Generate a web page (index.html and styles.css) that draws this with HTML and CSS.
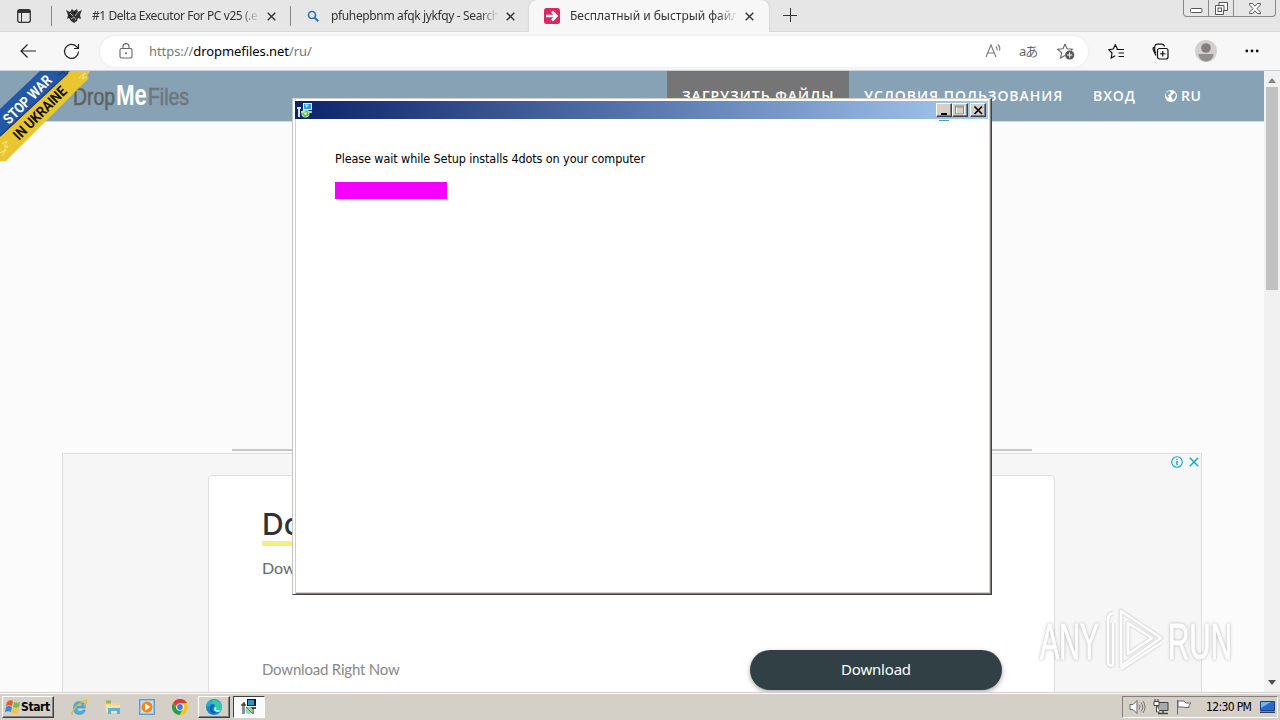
FILE: index.html
```html
<!DOCTYPE html>
<html lang="ru">
<head>
<meta charset="utf-8">
<title>DropMeFiles</title>
<link rel="stylesheet" href="styles.css">
</head>
<body>
<div class="desktop">
  <div class="browser">
    <div class="tabstrip">
      <div class="tab-actions">
        <svg width="14" height="14" viewBox="0 0 14 14"><rect x=".7" y=".7" width="12.6" height="12.6" rx="2" fill="none" stroke="#333" stroke-width="1.3"/><path d="M1 1h12v3H1z" fill="#333"/><path d="M4.5 4v9" stroke="#333"/></svg>
      </div>
      <div class="tab tab-first">
        <svg width="16" height="16" viewBox="0 0 16 16"><path d="M0 2l4 2 2-3 2 2 3-2 1 3 4-2-2 5 1 4-3-1-1 3-3 2-3-2-2-3-2 1 1-4z" fill="#333"/><path d="M4 5l3 3M12 4L9 8M5 11l3-2 2 3" stroke="#aaa" fill="none"/><path d="M8 4l1 2M3 7l2 2" stroke="#000"/></svg>
        <span class="tab-title t1">#1 Delta Executor For PC v25 (.e</span>
        <svg class="x" width="9" height="9" viewBox="0 0 9 9"><path d="M.7.7l7.6 7.6M8.3.7L.7 8.3" stroke="#333" stroke-width="1.4"/></svg>
      </div>
      <div class="tab tab-second">
        <svg width="16" height="16" viewBox="0 0 16 16"><circle cx="7" cy="7" r="3.5" fill="none" stroke="#2d73bd" stroke-width="1.7"/><path d="M9.7 9.7l3.6 3.6" stroke="#2d73bd" stroke-width="2"/></svg>
        <span class="tab-title t2">pfuhepbnm afqk jykfqy - Search</span>
        <svg class="x" width="9" height="9" viewBox="0 0 9 9"><path d="M.7.7l7.6 7.6M8.3.7L.7 8.3" stroke="#333" stroke-width="1.4"/></svg>
      </div>
      <div class="tab tab-active">
        <svg width="16" height="16" viewBox="0 0 16 16"><rect width="16" height="16" rx="2.5" fill="#dc2765"/><path d="M2 8h10M8 3.5L12.5 8 8 12.5" fill="none" stroke="#fff" stroke-width="2.6"/></svg>
        <span class="tab-title t3">Бесплатный и быстрый файло</span>
        <svg class="x" width="9" height="9" viewBox="0 0 9 9"><path d="M.7.7l7.6 7.6M8.3.7L.7 8.3" stroke="#333" stroke-width="1.4"/></svg>
      </div>
      <svg class="new-tab" width="14" height="14" viewBox="0 0 14 14"><path d="M0 7.5h14M7.5 0v14" stroke="#333"/></svg>
      <div class="win-controls">
        <span class="wc wc-min"><svg width="13" height="5" viewBox="0 0 13 5"><rect x=".5" y=".5" width="11.5" height="4" rx="1" fill="#fff" stroke="#555"/></svg></span>
        <span class="wc wc-max"><svg width="13" height="13" viewBox="0 0 13 13"><path d="M4 .5h8.500v8h-4v4H.5v-9H4z" fill="#fff" stroke="#555"/><path d="M4 3.500h5v5" fill="none" stroke="#555"/><rect x="3" y="6" width="3.500" height="3.500" fill="#fff" stroke="#555"/></svg></span>
        <span class="wc wc-close"><svg width="12" height="11" viewBox="0 0 12 11"><path d="M.5.5h3L6 3.200 8.500.5h3v1.400L8 5.500l3.500 3.700v1.300h-3L6 7.800 3.500 10.500h-3V9.200L4 5.500.5 1.900z" fill="#fff" stroke="#555"/></svg></span>
      </div>
    </div>

    <div class="toolbar">
      <svg class="back" width="16" height="14" viewBox="0 0 16 14"><path d="M16 7H1M7.500.5L1 7l6.500 6.500" fill="none" stroke="#222" stroke-width="1.200"/></svg>
      <svg class="reload" width="17" height="17" viewBox="0 0 17 17"><path d="M15.500 8.500a7 7 0 1 1-2-5l1.500 1.600M15.500 1v4.500H11" fill="none" stroke="#222" stroke-width="1.200"/></svg>
      <div class="address">
        <svg width="14" height="16" viewBox="0 0 14 16"><rect x="1" y="5.500" width="12" height="9.500" rx="1.500" fill="none" stroke="#666" stroke-width="1.100"/><path d="M4 5.500V3.600a3 3 0 0 1 6 0v1.900" fill="none" stroke="#666" stroke-width="1.100"/><circle cx="7" cy="10.300" r="1" fill="#666"/></svg>
        <span class="url">https://<b>dropmefiles.net</b>/ru/</span>
        <svg class="read" width="17" height="16" viewBox="0 0 17 16"><path d="M1 14L6 2l5 12M2.800 10h6.400M11 3.500q1.500 1.500 1 4M13 1.500q2.500 2.500 1.500 6" fill="none" stroke="#777" stroke-width="1.100"/></svg>
        <span class="translate">aあ</span>
        <svg class="fav" width="18" height="17" viewBox="0 0 18 17"><path d="M8 1l2 4.700 5.300.5-1 1.300M8 1L6 5.700.7 6.300l4 3.500-1.200 5.400L8 12.500" fill="none" stroke="#666" stroke-width="1.100"/><circle cx="12.700" cy="12" r="4.600" fill="#555"/><path d="M10 12h5.400M12.700 9.300v5.400" stroke="#fff"/></svg>
      </div>
      <svg class="favorites" width="17" height="15" viewBox="0 0 17 15"><path d="M9.500 5L7.300.9 5.200 5 .8 5.700 4 9l-.8 5 4-2.300M8.500 5.500H16M10.500 9H16M10.500 12.500H16" fill="none" stroke="#111" stroke-width="1.200"/></svg>
      <svg class="collections" width="17" height="17" viewBox="0 0 17 17"><rect x="5.500" y="5.500" width="10.500" height="10.500" rx="2" fill="none" stroke="#111" stroke-width="1.200"/><path d="M10.750 8v5.500M8 10.750h5.500M3.800 12.500L1.200 6.500Q.7 5 2 4.300M4 10Q2.700 9 2.700 7.500V4Q3 1.500 5 1.200h4.500q2.500 0 3 2.500" fill="none" stroke="#111" stroke-width="1.200"/></svg>
      <svg class="profile" width="22" height="22" viewBox="0 0 22 22"><circle cx="11" cy="11" r="11" fill="#d2d0ce"/><circle cx="11" cy="8" r="4.800" fill="#827f7c"/><path d="M3.500 15q0-1 1-1h13q1 0 1 1-2 6.500-7.500 6.500T3.500 15z" fill="#918e8b"/></svg>
      <svg class="more" width="14" height="4" viewBox="0 0 14 4"><circle cx="1.800" cy="2" r="1.400" fill="#111"/><circle cx="7" cy="2" r="1.400" fill="#111"/><circle cx="12.200" cy="2" r="1.400" fill="#111"/></svg>
    </div>

    <div class="viewport">
      <div class="page">
        <header class="site-header">
          <svg class="logo" width="120" height="36" viewBox="0 0 120 36">
            <g class="logo-text"><text x="2" y="28" font-size="24" textLength="42" lengthAdjust="spacingAndGlyphs" fill="#5e6265" stroke="#5e6265" stroke-width=".6">Drop</text><text x="45" y="28" font-size="30" textLength="31" lengthAdjust="spacingAndGlyphs" fill="#fff" font-weight="bold">Me</text><text x="77" y="28" font-size="24" textLength="41" lengthAdjust="spacingAndGlyphs" fill="#6e767c" stroke="#6e767c" stroke-width=".6">Files</text></g>
          </svg>
          <nav class="nav">
            <span class="nav-item current n1">ЗАГРУЗИТЬ ФАЙЛЫ</span>
            <span class="nav-item n2">УСЛОВИЯ ПОЛЬЗОВАНИЯ</span>
            <span class="nav-item n3">ВХОД</span>
            <span class="nav-item n4"><svg width="12" height="12" viewBox="0 0 12 12"><circle cx="6" cy="6" r="6" fill="#fff"/><path d="M4 1l2 1-1 2-2 1 1 2-1 1-2-2V3zM8 4l2-1 1 2-1 3-2 2-1-2-1-2z" fill="#86a2b3"/></svg>RU</span>
          </nav>
        </header>
        <svg class="ribbon" width="92" height="92" viewBox="0 0 92 92">
          <path d="M40 0h34L0 66V38z" fill="#2457a4"/>
          <path d="M70 0h20l-3 5 2 2L6 90H0V66z" fill="#e9c630"/>
          <path d="M2 73l5-3-3 6 4-1-6 7M0 82l6-3-4 6M79 7l6-5-3 6 5-2" fill="none" stroke="#f3e48c" stroke-width="1"/>
          <path d="M0 65L68 2M62 1l5 2M58 4l6-3" stroke="#1d4385" stroke-width="1.500"/>
          <g class="ribbon-text" font-weight="bold" font-size="14.500"><text transform="translate(9 54) rotate(-45)" textLength="62" lengthAdjust="spacingAndGlyphs" fill="#fff">STOP WAR</text><text transform="translate(19 70) rotate(-45)" textLength="69" lengthAdjust="spacingAndGlyphs" fill="#111">IN UKRAINE</text></g>
        </svg>
        <main class="content">
          <div class="divider"></div>
          <div class="ad">
            <div class="ad-controls">
              <svg width="12" height="12" viewBox="0 0 12 12"><circle cx="6" cy="6" r="5.300" fill="none" stroke="#19a9bf" stroke-width="1.100"/><path d="M6 5v4M6 2.800v1.300" stroke="#19a9bf" stroke-width="1.500"/></svg>
              <svg width="10" height="10" viewBox="0 0 10 10"><path d="M.8.8l8.400 8.400M9.200.8L.8 9.200" stroke="#19a9bf" stroke-width="1.500"/></svg>
            </div>
            <div class="ad-card">
              <div class="ad-title">Download</div>
              <div class="ad-sub">Download</div>
              <div class="ad-foot"><span class="ad-now">Download Right Now</span><span class="ad-button">Download</span></div>
            </div>
          </div>
        </main>
      </div>
      <div class="scrollbar">
        <svg width="8" height="5" viewBox="0 0 8 5"><path d="M0 5l4-5 4 5z" fill="#858585"/></svg>
        <div class="thumb"></div>
        <svg width="8" height="5" viewBox="0 0 8 5"><path d="M0 0h8L4 5z" fill="#505050"/></svg>
      </div>
    </div>
  </div>

  <div class="setup">
    <div class="setup-title">
      <svg width="16" height="16" viewBox="0 0 16 16"><path d="M6 1h9v7H6z" fill="#e6edf0"/><path d="M7 2h7v5H7z" fill="#2899e5"/><path d="M8 2l4 1-3 3z" fill="#9ee4ff"/><path d="M4 9h11v2H4z" fill="#b9c0bb"/><path d="M1 6l2-1v10H1zM0 5h4v2H0z" fill="#dbe2e4"/><circle cx="8.500" cy="11.500" r="4" fill="#bde3b8"/><path d="M5 12l5-4 2 5-4 2z" fill="#5bbf52"/><circle cx="8.500" cy="11.500" r="1.200" fill="#fff"/></svg>
      <span class="setup-buttons">
        <span class="cb"><svg width="14" height="12" viewBox="0 0 14 12"><path d="M3 8h6v2H3z" fill="#000"/></svg></span>
        <span class="cb"><svg width="14" height="12" viewBox="0 0 14 12"><path d="M2.500 1.500h8v8h-8z" fill="none" stroke="#fff"/><path d="M1.500 1h8v8h-8zM1.500 2h8" fill="none" stroke="#8a8781"/></svg></span>
        <span class="cb cb-close"><svg width="14" height="12" viewBox="0 0 14 12"><path d="M2.500 1.500l7.500 7.500M10 1.500L2.500 9" stroke="#000" stroke-width="1.700"/></svg></span>
      </span>
    </div>
    <div class="setup-body">
      <div class="setup-text">Please wait while Setup installs 4dots on your computer</div>
      <div class="progress"></div>
    </div>
    <div class="spinner-edge"></div>
  </div>

  <svg class="watermark" width="204" height="70" viewBox="0 0 204 70">
    <g class="wm-shadow" fill="none" stroke-linejoin="round">
      <path d="M78 8q-5 1-5 7v42q0 5 5 3V18M86 6l40 27-40 28zM93 18l24 15-24 16zM86 64l40-26" stroke="#bdbdbd" stroke-width="5" opacity=".45"/>
      <path d="M78 8q-5 1-5 7v42q0 5 5 3V18M86 6l40 27-40 28zM93 18l24 15-24 16zM86 64l40-26" stroke="#fff" stroke-width="2.500"/>
    </g>
    <g class="wm-text" font-size="50"><text x="5" y="54" textLength="59" lengthAdjust="spacingAndGlyphs">ANY</text><text x="133" y="54" textLength="64" lengthAdjust="spacingAndGlyphs">RUN</text></g>
  </svg>

  <div class="taskbar">
    <div class="start">
      <svg width="16" height="16" viewBox="0 0 16 16"><path d="M2 3q3-3 6-1L7 7Q4 5.500 1 7z" fill="#e75a23"/><path d="M9 3q3 1.500 6 0l-1 5q-3 1.500-6 0z" fill="#7fb842"/><path d="M1 8q3-2 6 0l-1 5q-3-1.500-6 0z" fill="#3b86d2"/><path d="M8 9q3 1.500 6 0l-1.500 5q-3 1.500-6 0z" fill="#f7c52c"/></svg>
      <span>Start</span>
    </div>
    <div class="quick">
      <svg width="16" height="16" viewBox="0 0 16 16"><path d="M14.500 9H6q0 3.500 3 3.500 2 0 3-1.500h2.300Q13 15.500 8.500 15.500 2.500 15.500 2.500 9T8.500 2.500q6 0 6 6.500zM6 7h5.500Q11 4.500 8.800 4.500T6 7z" fill="#45b2e4" stroke="#2787c0" stroke-width=".5"/><path d="M2 15.500Q-1 15 4 9T15 1q2 2-2 6" fill="none" stroke="#e7b637" stroke-width="1.300"/></svg>
      <svg width="18" height="16" viewBox="0 0 18 16"><path d="M1 3h6l1 1h8v9H1z" fill="#ecd688"/><path d="M2 1.500h5v3H2z" fill="#8cb95b"/><path d="M2 6h14v8H2z" fill="#f3e3a4"/><path d="M4 9h12v6h-3v-3H7v3H4z" fill="#60aedb"/></svg>
      <svg width="16" height="16" viewBox="0 0 16 16"><rect x=".7" y=".7" width="14.600" height="14.600" fill="#c4dff3" stroke="#5f9bcb" stroke-width="1.400"/><circle cx="8" cy="8" r="5.500" fill="#f58514"/><path d="M6 4.500v7L11.500 8z" fill="#fff"/></svg>
      <svg width="16" height="16" viewBox="0 0 16 16"><circle cx="8" cy="8" r="8" fill="#f4c51e"/><path d="M1 4a8 8 0 0 1 14 0H8L5 9z" fill="#dd3c2e"/><path d="M1 4a8 8 0 0 0 6.500 12l3.500-6H5z" fill="#269b4c"/><circle cx="8" cy="8" r="3.800" fill="#fff"/><circle cx="8" cy="8" r="2.900" fill="#397bed"/></svg>
    </div>
    <div class="task task-edge"><svg width="16" height="16" viewBox="0 0 16 16"><circle cx="8" cy="8" r="8" fill="#1689d3"/><path d="M.2 7A8 8 0 0 1 16 8q0 4-5 4-3 0-2-2 1-4-2-5Q3 4 .2 7z" fill="#38cba0"/><path d="M.2 7Q3 1 9 2q-4 1-5 5z" fill="#2aa9df"/><path d="M4 10q0-5 5-4.500Q2 10 10 14q-5 2-6-4z" fill="#0b5b9e"/><path d="M9 8q2 0 1 2t5 1.500q-2 2-5 1T9 8z" fill="#fff"/></svg></div>
    <div class="task task-setup"><svg width="16" height="16" viewBox="0 0 16 16"><path d="M6 0h9v7H6z" fill="#111"/><path d="M7 1h6v5H7z" fill="#2899c5"/><path d="M1 4h3v11H1zM0 5h5M5 8h10v2H5z" fill="#8a9090"/><path d="M3 3v2M0 6h5M5 9h10M12 9v6" stroke="#111"/><circle cx="8" cy="11.500" r="3.500" fill="#9bd7b2"/><path d="M6 9l5 5" stroke="#35945a"/></svg></div>
    <div class="tray">
      <svg width="17" height="16" viewBox="0 0 17 16"><path d="M1 5.500h3l4-4v13l-4-4H1z" fill="#fff" stroke="#666"/><path d="M10 5.500q2 2.500 0 5M12 3.500q3.500 4.500 0 9M14 2q4 6 0 12" fill="none" stroke="#777"/></svg>
      <svg width="16" height="16" viewBox="0 0 16 16"><path d="M5 3.500h10v8H5z" fill="#aaa" stroke="#444"/><path d="M5 14.500h10M10 12v2" stroke="#444" stroke-width="1.500"/><path d="M1 2.500h5v4H1zM2 0v2M5 0v2M3.500 7v6H7" fill="#fff" stroke="#444"/></svg>
      <svg width="16" height="16" viewBox="0 0 16 16"><path d="M1.500 1v14.500M2 2h6l2 2h5l-2 2.500 0 2H9L7 8H2z" fill="#fff" stroke="#666"/></svg>
      <span class="clock">12:30 PM</span>
      <svg class="show" width="15" height="14" viewBox="0 0 15 14"><path d="M.5 1.500h14v9H.5z" fill="#2868c8" stroke="#164387"/><path d="M1 2h10L1 8z" fill="#78b1ed"/><path d="M0 11.500h15v1.500H0z" fill="#263c62"/></svg>
    </div>
  </div>
</div>
</body>
</html>
```
FILE: styles.css
```css
* { box-sizing: border-box; }
body { margin: 0; }
svg { display: block; flex: none; }

.desktop {
  position: relative;
  display: flex;
  flex-direction: column;
  width: 1280px;
  height: 720px;
  overflow: hidden;
  font-family: "Noto Sans", sans-serif;
}
.browser { display: flex; flex-direction: column; height: 692px; background: #f7f7f7; }

/* Tab strip */
.tabstrip { display: flex; height: 32px; background: #e6e6e6; border-bottom: 1px solid #d9d9d9; }
.tab-actions { width: 52px; height: 20px; margin-top: 6px; padding: 3px 0 0 17px; border-right: 1px solid #888; }
.tab { display: flex; align-items: center; height: 32px; }
.tab-first { width: 239px; height: 20px; margin-top: 6px; padding-left: 14px; border-right: 1px solid #888; }
.tab-second { width: 238px; padding-left: 14px; }
.tab-active { width: 240px; padding-left: 15px; background: #f7f7f7; border-radius: 8px 8px 0 0; box-shadow: 0 0 2px #bbb; clip-path: inset(0 -3px 0 -3px); }
.tab-title {
  width: 166px;
  margin-left: 10px;
  white-space: nowrap;
  font-size: 12px;
  line-height: 18px;
  color: #333;
  -webkit-mask-image: linear-gradient(to right, #000 89%, transparent 101%);
  mask-image: linear-gradient(to right, #000 89%, transparent 101%);
}
.t1 { letter-spacing: -.43px; }
.t2 { letter-spacing: -.36px; }
.t3 { letter-spacing: -.02px; }
.x { margin-left: 9px; }
.new-tab { margin: 8px 0 0 14px; }
.win-controls { display: flex; width: 93px; height: 17px; margin: 0 4px 0 auto; border: 1px solid #888; border-top: 0; border-radius: 0 0 4px 4px; }
.wc { display: flex; align-items: center; justify-content: center; border-right: 1px solid #888; }
.wc-min { width: 25px; padding-top: 5px; }
.wc-max { width: 25px; }
.wc-close { flex: 1; border: 0; }

/* Toolbar */
.toolbar { display: flex; align-items: center; height: 38px; padding-left: 20px; }
.reload { margin-left: 27px; }
.address { display: flex; align-items: center; width: 988px; height: 31px; margin-left: 20px; padding-left: 19px; background: #fff; border-radius: 16px; box-shadow: 0 0 3px #e4e4e4; }
.url { width: 170px; margin-left: 16px; font-size: 13px; line-height: 20px; letter-spacing: -.07px; color: #777; white-space: nowrap; }
.url b { font-weight: 400; color: #000; }
.read { margin-left: 666px; }
.translate { width: 20px; margin-left: 17px; font: 13px/20px "Noto Sans", "Noto Sans CJK JP", sans-serif; letter-spacing: -1px; color: #666; white-space: nowrap; }
.fav { margin-left: 18px; }
.favorites { margin-left: 20px; }
.collections { margin-left: 27px; }
.profile { margin-left: 26px; }
.more { margin-left: 28px; }

/* Web page */
.viewport { display: flex; height: 622px; border-top: 1px solid #c8d2da; }
.page { position: relative; width: 1264px; height: 621px; overflow: hidden; background: #fbfbfb; }
.site-header { display: flex; height: 51px; padding: 0 47px 0 71px; background: #86a2b4; border-bottom: 1px solid #cfdce6; }
.logo { margin-top: 6px; }
.logo-text { font-family: "Liberation Sans", sans-serif; }
.nav { display: flex; margin-left: auto; }
.nav-item { display: flex; align-items: center; gap: 4px; padding: 0 15px; font: 600 14px/50px "Open Sans", sans-serif; color: #fff; white-space: nowrap; }
.current { background: #757575; }
.n1 { width: 182px; letter-spacing: 1px; }
.n2 { width: 229px; letter-spacing: .95px; }
.n3 { width: 72px; letter-spacing: .9px; }
.n4 { width: 67px; letter-spacing: .5px; }
.ribbon { position: absolute; left: 0; top: 0; }
.ribbon-text { font-family: Roboto, sans-serif; }
.content { width: 1140px; margin: 0 auto; padding-top: 327px; }
.divider { width: 800px; height: 2px; margin: 0 auto; background: #c6c6c6; }
.ad { height: 243px; margin-top: 2px; background: #f6f6f6; border: 1px solid #dedede; }
.ad-controls { display: flex; align-items: center; justify-content: flex-end; gap: 6px; height: 15px; padding-right: 2px; }
.ad-card { width: 847px; height: 230px; margin: 6px 0 0 145px; padding: 31px 53px 0; background: #fff; border: 1px solid #dedede; border-radius: 4px; }
.ad-title { display: table; font: 500 30px/34px Inter, sans-serif; color: #303035; border-bottom: 5px solid #f4f07d; }
.ad-sub { margin-top: 10px; font: 16px/24px Lato, sans-serif; color: #666; }
.ad-foot { display: flex; align-items: center; justify-content: space-between; width: 740px; height: 40px; margin-top: 70px; }
.ad-now { padding-bottom: 2px; font: 15px/20px Lato, sans-serif; letter-spacing: -.2px; color: #888; }
.ad-button { width: 252px; height: 40px; border-radius: 20px; background: #314045; box-shadow: 0 2px 5px #aaa; font: 15px/38px "Noto Sans", sans-serif; letter-spacing: -.2px; color: #fff; text-align: center; }
.scrollbar { display: flex; flex-direction: column; align-items: center; width: 16px; padding: 7px 0; background: #f1f1f1; }
.thumb { width: 12px; height: 203px; margin: 4px 0 auto; background: #c1c1c1; }

/* Installer window */
.setup { position: absolute; left: 292px; top: 98px; width: 700px; height: 497px; padding: 1px; background: #fff; border: 1px solid; border-color: #d4d0c8 #404040 #404040 #c4c4c4; box-shadow: inset 2px 0 #fff, inset 3px 0 #d4d0c8, inset -1px -1px #808080, inset -2px -2px #d4d0c8; }
.setup-title { display: flex; align-items: center; height: 18px; margin: 1px 2px 0 1px; padding: 0 2px 0 2px; background: linear-gradient(to right, #0a246a, #a6caf0); }
.setup-buttons { display: flex; margin-left: auto; }
.cb { width: 16px; height: 14px; padding: 1px; background: #d4d0c8; border: 1px solid; border-color: #fff #404040 #404040 #fff; box-shadow: inset -1px -1px #808080; }
.cb-close { margin-left: 2px; }
.setup-body { padding: 30px 0 0 41px; }
.setup-text { font: 12.5px/20px "DejaVu Sans Condensed", "DejaVu Sans", sans-serif; letter-spacing: -.1px; color: #000; white-space: nowrap; }
.progress { width: 112px; height: 17px; margin-top: 13px; background: #f400ff; }
.spinner-edge { position: absolute; left: 646px; top: 21px; width: 10px; height: 1px; background: #4a9caa; }

/* Overlay mark */
.watermark { position: absolute; left: 1035px; top: 605px; opacity: .9; }
.wm-text { font-family: "Liberation Sans Narrow", "Liberation Sans", sans-serif; fill: #fff; stroke: #fff; filter: drop-shadow(0 0 1.5px #aaa); }

/* Taskbar */
.taskbar { display: flex; align-items: center; height: 28px; padding: 1px 2px 0; background: #d4d0c8; border-top: 1px solid #d4d0c8; box-shadow: inset 0 1px #fff; }
.start { display: flex; align-items: center; width: 52px; height: 22px; padding-left: 2px; border: 1px solid; border-color: #fff #404040 #404040 #fff; box-shadow: inset -1px -1px #808080; font: bold 12px/16px "DejaVu Sans Condensed", "DejaVu Sans", sans-serif; letter-spacing: -.4px; }
.quick { display: flex; align-items: center; gap: 17px; margin-left: 17px; }
.task { display: flex; align-items: center; justify-content: center; width: 32px; height: 22px; border: 1px solid; }
.task-edge { margin-left: 10px; border-color: #fff #404040 #404040 #fff; box-shadow: inset -1px -1px #808080; }
.task-setup { margin-left: 3px; background: #fafafa; border-color: #404040 #fff #fff #404040; }
.tray { display: flex; align-items: center; width: 156px; height: 22px; margin-left: auto; padding-left: 6px; gap: 7px; border: 1px solid; border-color: #808080 #fff #fff #808080; }
.clock { width: 47px; margin-left: 7px; font: 12px/16px "DejaVu Sans Condensed", "DejaVu Sans", sans-serif; letter-spacing: -.65px; white-space: nowrap; }
```
